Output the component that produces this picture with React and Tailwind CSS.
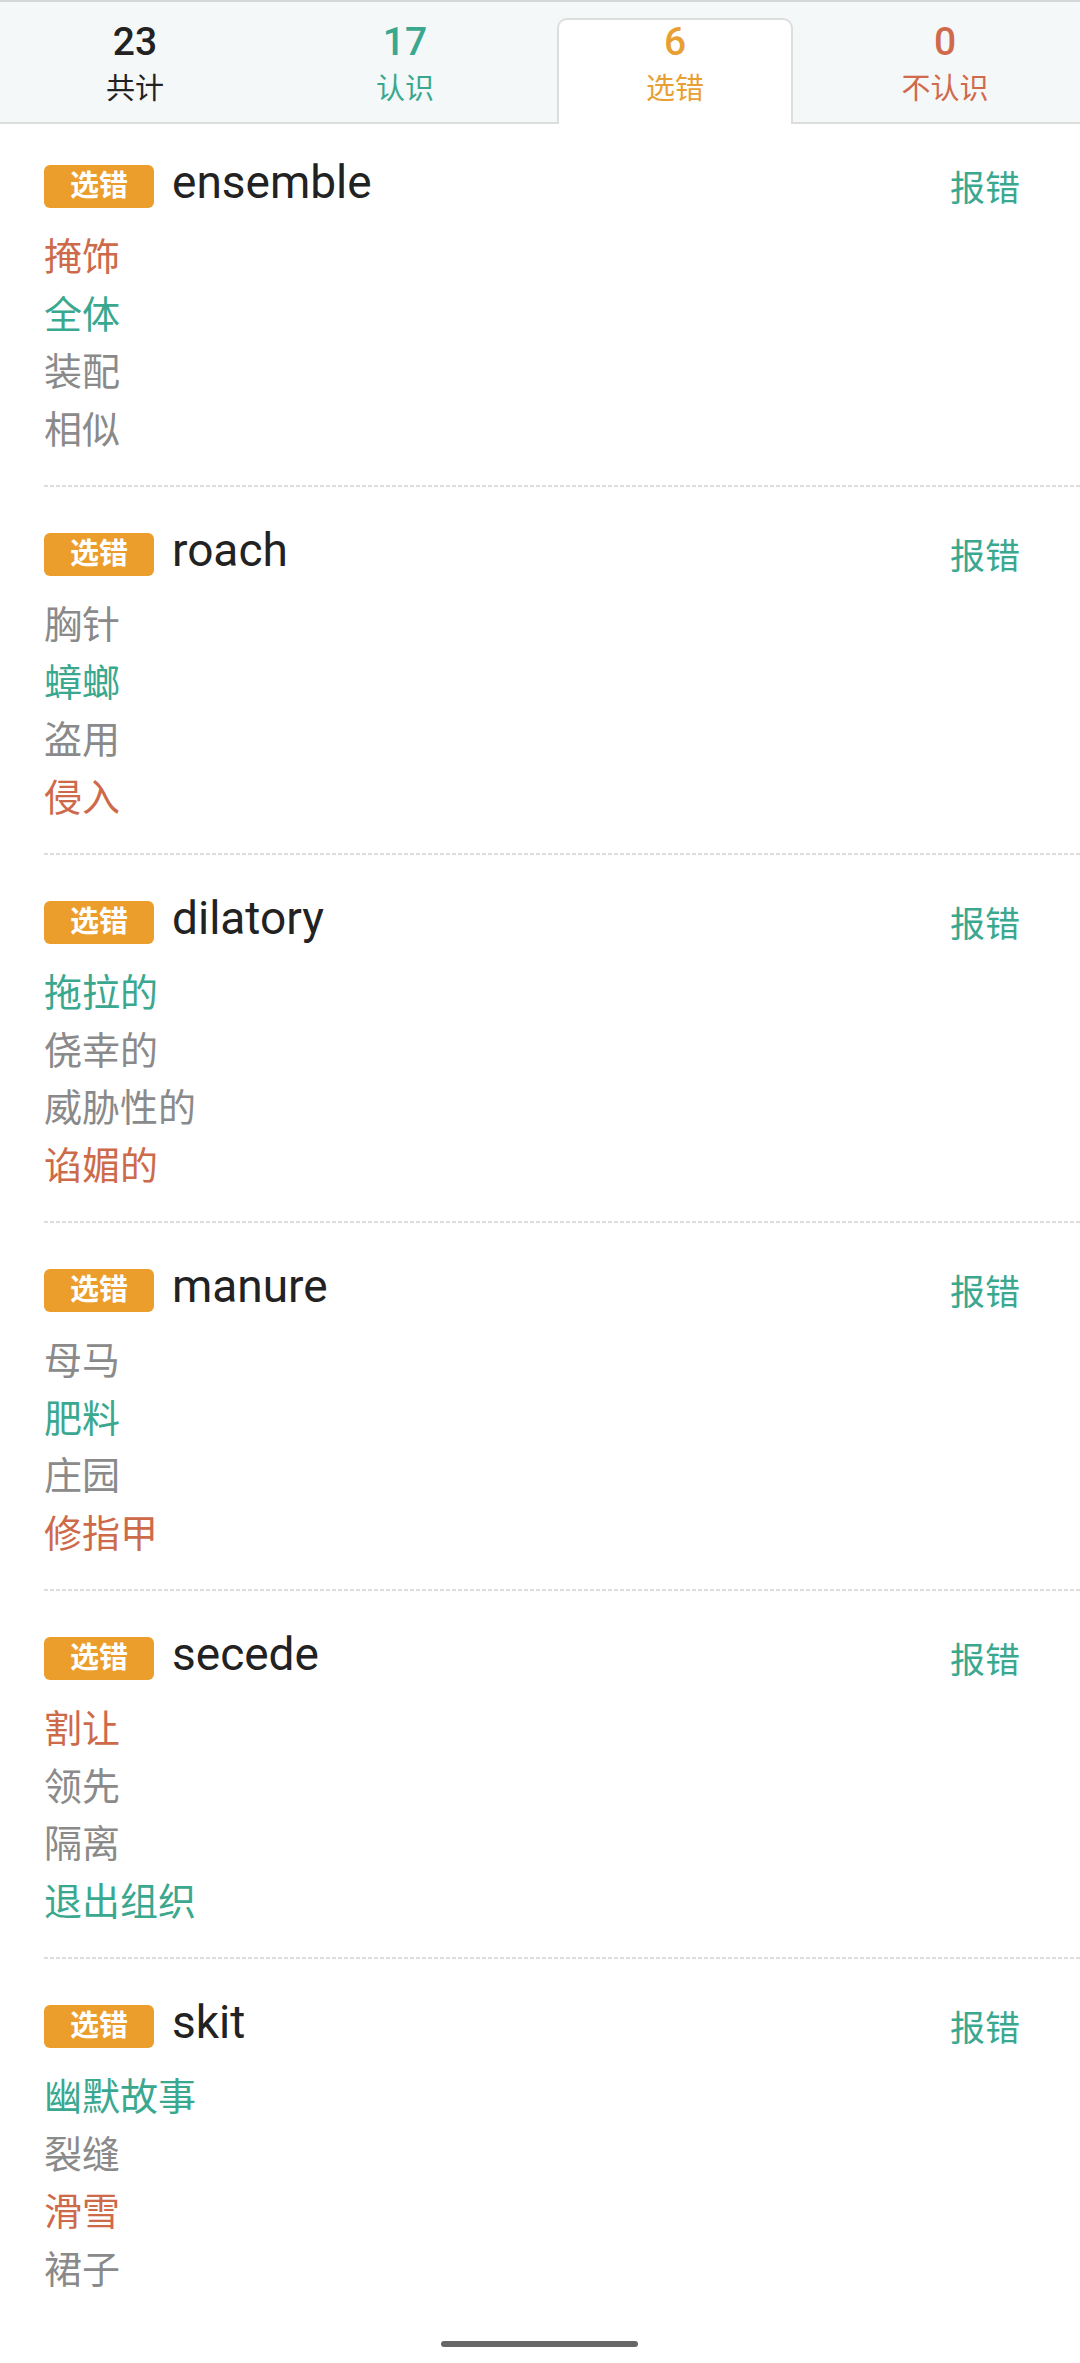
import React from "react";

const R = "text-[#cd6a4a]";
const T = "text-[#3aa88f]";
const G = "text-[#8a8a8a]";

const cards = [
  { word: "ensemble", m: [["掩饰", R], ["全体", T], ["装配", G], ["相似", G]] },
  { word: "roach", m: [["胸针", G], ["蟑螂", T], ["盗用", G], ["侵入", R]] },
  { word: "dilatory", m: [["拖拉的", T], ["侥幸的", G], ["威胁性的", G], ["谄媚的", R]] },
  { word: "manure", m: [["母马", G], ["肥料", T], ["庄园", G], ["修指甲", R]] },
  { word: "secede", m: [["割让", R], ["领先", G], ["隔离", G], ["退出组织", T]] },
  { word: "skit", m: [["幽默故事", T], ["裂缝", G], ["滑雪", R], ["裙子", G]] },
];

const tabs = [
  { n: "23", l: "共计", c: "text-[#222222]", lc: "text-[#222222]" },
  { n: "17", l: "认识", c: "text-[#3aa88f]", lc: "text-[#3aa88f]" },
  { n: "6", l: "选错", c: "text-[#e8a034]", lc: "text-[#e8a034]", active: true },
  { n: "0", l: "不认识", c: "text-[#d06a4c]", lc: "text-[#d06a4c]" },
];

const cjk = "font-['Roboto','Noto_Sans_CJK_SC',sans-serif]";

export default function App() {
  return (
    <div className={`relative h-[2363px] w-[1080px] overflow-hidden bg-white ${cjk}`}>
      <div className="flex h-[124px] border-t-2 border-b-2 border-t-[#d3d7d7] border-b-[#dcdede] bg-[#f5f8f8]">
        {tabs.map((t) => (
          <div key={t.l} className="flex flex-1 flex-col pt-[16px]">
            <div
              className={
                t.active
                  ? "mx-[17px] -mb-[2px] flex flex-1 flex-col items-center rounded-t-[10px] border-2 border-b-0 border-[#dddddd] bg-white"
                  : "mx-[17px] -mb-[2px] flex flex-1 flex-col items-center border-2 border-b-0 border-transparent"
              }
            >
              <div className={`text-[39px] font-medium leading-[44px] ${t.c}`}>{t.n}</div>
              <div className={`mt-[5px] text-[29px] leading-[40px] ${t.lc}`}>{t.l}</div>
            </div>
          </div>
        ))}
      </div>

      {cards.map((c, i) => (
        <div key={c.word} className="pl-[44px]">
          <div className={`${i === 0 ? "pt-[41px]" : "pt-[46px]"} pr-[60px] pb-[26px]`}>
            <div className="flex h-[43px] items-center">
              <div className="flex h-[43px] w-[110px] shrink-0 items-center justify-center rounded-[6px] bg-[#eb9e2b] text-[29px] font-bold leading-none text-white">
                选错
              </div>
              <div className="ml-[18px] -translate-y-[5px] text-[46px] leading-[50px] text-[#222222]">{c.word}</div>
              <div className="ml-auto translate-y-[3px] text-[35px] leading-[44px] text-[#3aa88f]">报错</div>
            </div>
            <div className="mt-[21px] flex flex-col">
              {c.m.map(([t, col]) => (
                <div key={t} className={`text-[38px] leading-[57.5px] ${col}`}>
                  {t}
                </div>
              ))}
            </div>
          </div>
          {i < cards.length - 1 && (
            <div className="h-[2px] bg-[linear-gradient(to_right,#dddddd_66%,transparent_0)] bg-[length:6px_2px] bg-repeat-x" />
          )}
        </div>
      ))}

      <div className="absolute bottom-[16px] left-[441px] h-[6px] w-[197px] rounded-full bg-[#666666]" />
    </div>
  );
}
